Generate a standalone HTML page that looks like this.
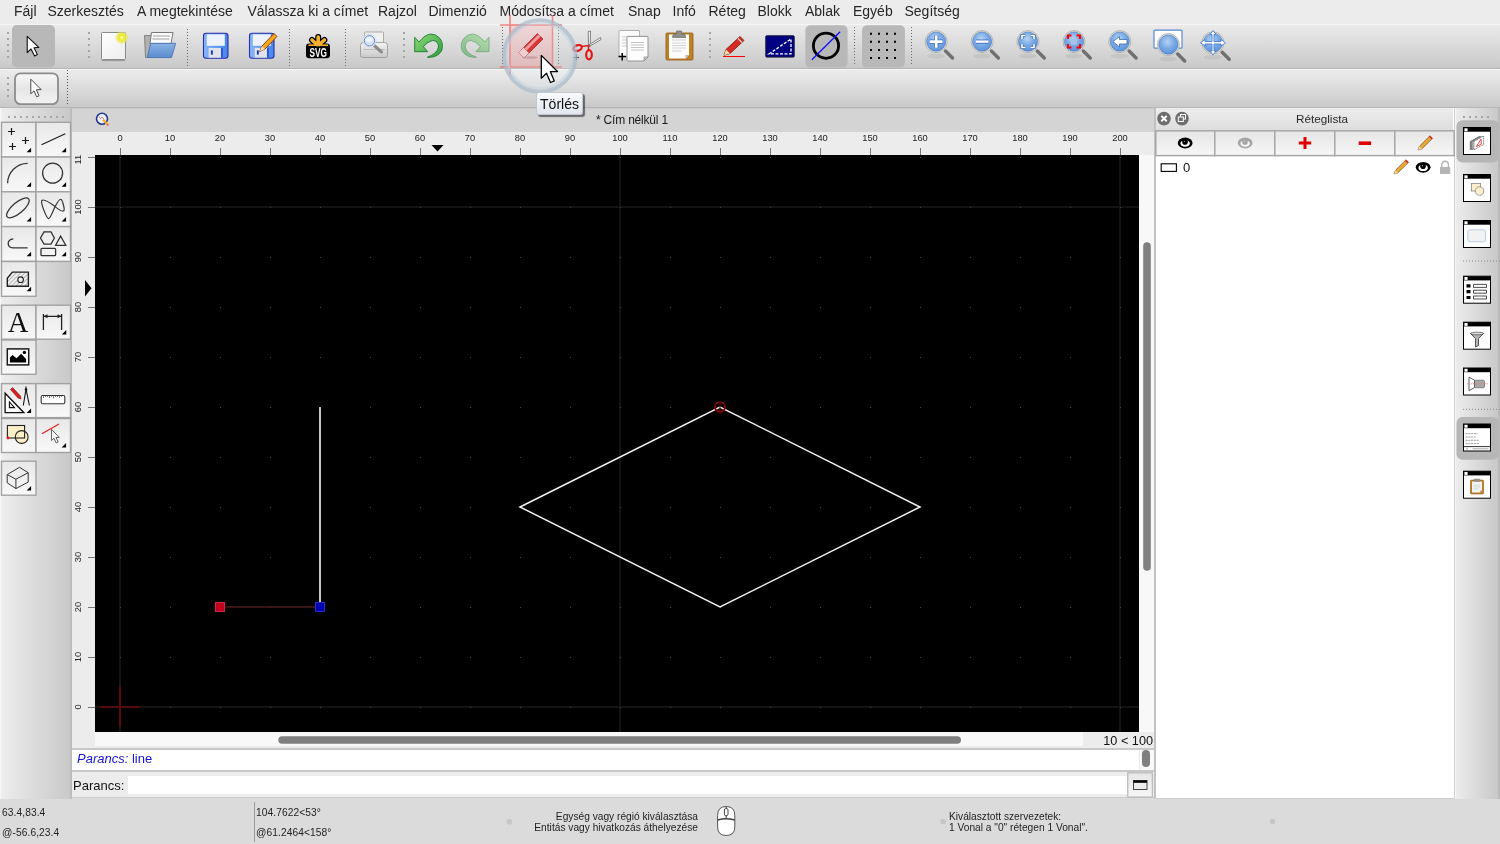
<!DOCTYPE html>
<html><head><meta charset="utf-8">
<style>
*{margin:0;padding:0;box-sizing:border-box}
html{will-change:transform}
html,body{width:1500px;height:844px;overflow:hidden;background:#ececec;font-family:"Liberation Sans",sans-serif;color:#262626}
.a{position:absolute}
#menubar{left:0;top:0;width:1500px;height:24px;background:#ececec}
#menubar span{position:absolute;top:3px;font-size:14px;line-height:17px;color:#262626}
#tb1{left:0;top:24px;width:1500px;height:45px;background:linear-gradient(#eaeaea,#c9c9c9);border-top:1px solid #f5f5f5;border-bottom:1px solid #b4b4b4}
#tb2{left:0;top:69px;width:1500px;height:39px;background:linear-gradient(#ececec,#c9c9c9);border-top:1px solid #f6f6f6;border-bottom:1px solid #b6b6b6}
#left{left:0;top:108px;width:72px;height:691px;background:linear-gradient(90deg,#f8f8f8 0,#f8f8f8 1px,#eeeeee 1px,#e2e2e2 30%,#c9c9c9 100%);border-right:2px solid #bdbdbd}
#doctitle{left:72px;top:108px;width:1082px;height:24px;background:#d4d4d4;border-top:1px solid #c9c9c9}
#doctitle span{position:absolute;left:524px;top:4px;font-size:12px;line-height:14px;letter-spacing:-.2px;color:#1a1a1a}
#rulerT{left:72px;top:132px;width:1082px;height:23px;background:#ececec}
#rulerL{left:72px;top:155px;width:23px;height:591px;background:#ececec}
.rl{position:absolute;top:133px;width:40px;text-align:center;font-size:9.3px;line-height:11px;color:#222}
.vl{position:absolute;left:-14px;width:40px;height:40px;line-height:40px;text-align:center;font-size:9.3px;color:#222;transform:rotate(-90deg)}
#canvas{left:95px;top:155px;width:1044px;height:577px;background:#000;overflow:hidden}
#vscroll{left:1139px;top:155px;width:15px;height:591px;background:#f8f8f8}
#hscroll{left:95px;top:732px;width:988px;height:14px;background:#f8f8f8}
#zoomlbl{left:1083px;top:732px;width:71px;height:16px;background:#ececec;font-size:12.7px;line-height:18px;text-align:right;padding-right:1px;color:#111;white-space:nowrap;overflow:hidden}
#cmdout{left:72px;top:748px;width:1082px;height:24px;background:#fff;border-top:2px solid #c8c8c8;border-bottom:2px solid #c8c8c8}
#cmdout span{position:absolute;left:5px;top:1px;font-size:13px;line-height:16px;color:#1414d2}
#cmdin{left:72px;top:772px;width:1082px;height:26px;background:#ececec;border-bottom:1px solid #cdcdcd}
#cmdin span{position:absolute;left:1px;top:6px;font-size:13px;line-height:16px;color:#111}
#cmdfield{left:128px;top:776px;width:999px;height:18px;background:#fff}
#status{left:0;top:798px;width:1500px;height:46px;background:#dbdbdb}
.st{position:absolute;font-size:10.2px;line-height:11px;color:#1e1e1e;white-space:nowrap}
.co{letter-spacing:.1px}
#dock{left:1154px;top:108px;width:301px;height:691px;border-bottom:1px solid #cecece;background:#fff;border-left:2px solid #c2c2c2;border-right:1px solid #d0d0d0}
#docktitle{left:1156px;top:108px;width:297px;height:22px;background:linear-gradient(#ececec,#dedede)}
#docktitle span{position:absolute;left:140px;top:4px;font-size:11.7px;line-height:14px;color:#2a2a2a}
#rtb{left:1455px;top:108px;width:45px;height:691px;background:linear-gradient(90deg,#f6f6f6 0,#f6f6f6 1px,#ececec 1px,#c8c8c8 43px,#bababa 43px);}
#tooltip{left:536px;top:91.5px;width:47px;height:23.5px;border:1px solid #c4c8ce;border-radius:3px;background:linear-gradient(#f8f9fb,#e2e7ee);box-shadow:2px 2px 1px rgba(0,0,0,.5);font-size:14px;line-height:22px;text-align:center;color:#111}
</style></head><body>

<div id="menubar" class="a">
<span style="left:14px">Fájl</span>
<span style="left:47.5px">Szerkesztés</span>
<span style="left:137px">A megtekintése</span>
<span style="left:247.5px">Válassza ki a címet</span>
<span style="left:378px">Rajzol</span>
<span style="left:428.5px">Dimenzió</span>
<span style="left:499.5px">Módosítsa a címet</span>
<span style="left:628px">Snap</span>
<span style="left:672.5px">Infó</span>
<span style="left:708.5px">Réteg</span>
<span style="left:757.5px">Blokk</span>
<span style="left:805px">Ablak</span>
<span style="left:853px">Egyéb</span>
<span style="left:904.5px">Segítség</span>
</div>

<div id="status" class="a"></div>
<div id="tb1" class="a"></div>
<div id="tb2" class="a"></div>
<div id="left" class="a"></div>
<div id="doctitle" class="a"><span>* Cím nélkül 1</span></div>
<div id="rulerT" class="a"></div>
<div id="rulerL" class="a" style="overflow:hidden"><div class="vl" style="top:532px">0</div><div class="vl" style="top:482px">10</div><div class="vl" style="top:432px">20</div><div class="vl" style="top:382px">30</div><div class="vl" style="top:332px">40</div><div class="vl" style="top:282px">50</div><div class="vl" style="top:232px">60</div><div class="vl" style="top:182px">70</div><div class="vl" style="top:132px">80</div><div class="vl" style="top:82px">90</div><div class="vl" style="top:32px">100</div><div class="vl" style="top:-18px">110</div></div>
<div class="rl" style="left:100px">0</div><div class="rl" style="left:150px">10</div><div class="rl" style="left:200px">20</div><div class="rl" style="left:250px">30</div><div class="rl" style="left:300px">40</div><div class="rl" style="left:350px">50</div><div class="rl" style="left:400px">60</div><div class="rl" style="left:450px">70</div><div class="rl" style="left:500px">80</div><div class="rl" style="left:550px">90</div><div class="rl" style="left:600px">100</div><div class="rl" style="left:650px">110</div><div class="rl" style="left:700px">120</div><div class="rl" style="left:750px">130</div><div class="rl" style="left:800px">140</div><div class="rl" style="left:850px">150</div><div class="rl" style="left:900px">160</div><div class="rl" style="left:950px">170</div><div class="rl" style="left:1000px">180</div><div class="rl" style="left:1050px">190</div><div class="rl" style="left:1100px">200</div>
<div id="canvas" class="a">
<svg width="1044" height="577" viewBox="95 155 1044 577" style="display:block">
<path d="M95 207H1139M95 707H1139" stroke="#131313" stroke-width="2"/>
<path d="M120 155V732M620 155V732M1120 155V732" stroke="#131313" stroke-width="2"/>
<path d="M120 707h1v1h-1zM120 657h1v1h-1zM120 607h1v1h-1zM120 557h1v1h-1zM120 507h1v1h-1zM120 457h1v1h-1zM120 407h1v1h-1zM120 357h1v1h-1zM120 307h1v1h-1zM120 257h1v1h-1zM120 207h1v1h-1zM120 157h1v1h-1zM170 707h1v1h-1zM170 657h1v1h-1zM170 607h1v1h-1zM170 557h1v1h-1zM170 507h1v1h-1zM170 457h1v1h-1zM170 407h1v1h-1zM170 357h1v1h-1zM170 307h1v1h-1zM170 257h1v1h-1zM170 207h1v1h-1zM170 157h1v1h-1zM220 707h1v1h-1zM220 657h1v1h-1zM220 607h1v1h-1zM220 557h1v1h-1zM220 507h1v1h-1zM220 457h1v1h-1zM220 407h1v1h-1zM220 357h1v1h-1zM220 307h1v1h-1zM220 257h1v1h-1zM220 207h1v1h-1zM220 157h1v1h-1zM270 707h1v1h-1zM270 657h1v1h-1zM270 607h1v1h-1zM270 557h1v1h-1zM270 507h1v1h-1zM270 457h1v1h-1zM270 407h1v1h-1zM270 357h1v1h-1zM270 307h1v1h-1zM270 257h1v1h-1zM270 207h1v1h-1zM270 157h1v1h-1zM320 707h1v1h-1zM320 657h1v1h-1zM320 607h1v1h-1zM320 557h1v1h-1zM320 507h1v1h-1zM320 457h1v1h-1zM320 407h1v1h-1zM320 357h1v1h-1zM320 307h1v1h-1zM320 257h1v1h-1zM320 207h1v1h-1zM320 157h1v1h-1zM370 707h1v1h-1zM370 657h1v1h-1zM370 607h1v1h-1zM370 557h1v1h-1zM370 507h1v1h-1zM370 457h1v1h-1zM370 407h1v1h-1zM370 357h1v1h-1zM370 307h1v1h-1zM370 257h1v1h-1zM370 207h1v1h-1zM370 157h1v1h-1zM420 707h1v1h-1zM420 657h1v1h-1zM420 607h1v1h-1zM420 557h1v1h-1zM420 507h1v1h-1zM420 457h1v1h-1zM420 407h1v1h-1zM420 357h1v1h-1zM420 307h1v1h-1zM420 257h1v1h-1zM420 207h1v1h-1zM420 157h1v1h-1zM470 707h1v1h-1zM470 657h1v1h-1zM470 607h1v1h-1zM470 557h1v1h-1zM470 507h1v1h-1zM470 457h1v1h-1zM470 407h1v1h-1zM470 357h1v1h-1zM470 307h1v1h-1zM470 257h1v1h-1zM470 207h1v1h-1zM470 157h1v1h-1zM520 707h1v1h-1zM520 657h1v1h-1zM520 607h1v1h-1zM520 557h1v1h-1zM520 507h1v1h-1zM520 457h1v1h-1zM520 407h1v1h-1zM520 357h1v1h-1zM520 307h1v1h-1zM520 257h1v1h-1zM520 207h1v1h-1zM520 157h1v1h-1zM570 707h1v1h-1zM570 657h1v1h-1zM570 607h1v1h-1zM570 557h1v1h-1zM570 507h1v1h-1zM570 457h1v1h-1zM570 407h1v1h-1zM570 357h1v1h-1zM570 307h1v1h-1zM570 257h1v1h-1zM570 207h1v1h-1zM570 157h1v1h-1zM620 707h1v1h-1zM620 657h1v1h-1zM620 607h1v1h-1zM620 557h1v1h-1zM620 507h1v1h-1zM620 457h1v1h-1zM620 407h1v1h-1zM620 357h1v1h-1zM620 307h1v1h-1zM620 257h1v1h-1zM620 207h1v1h-1zM620 157h1v1h-1zM670 707h1v1h-1zM670 657h1v1h-1zM670 607h1v1h-1zM670 557h1v1h-1zM670 507h1v1h-1zM670 457h1v1h-1zM670 407h1v1h-1zM670 357h1v1h-1zM670 307h1v1h-1zM670 257h1v1h-1zM670 207h1v1h-1zM670 157h1v1h-1zM720 707h1v1h-1zM720 657h1v1h-1zM720 607h1v1h-1zM720 557h1v1h-1zM720 507h1v1h-1zM720 457h1v1h-1zM720 407h1v1h-1zM720 357h1v1h-1zM720 307h1v1h-1zM720 257h1v1h-1zM720 207h1v1h-1zM720 157h1v1h-1zM770 707h1v1h-1zM770 657h1v1h-1zM770 607h1v1h-1zM770 557h1v1h-1zM770 507h1v1h-1zM770 457h1v1h-1zM770 407h1v1h-1zM770 357h1v1h-1zM770 307h1v1h-1zM770 257h1v1h-1zM770 207h1v1h-1zM770 157h1v1h-1zM820 707h1v1h-1zM820 657h1v1h-1zM820 607h1v1h-1zM820 557h1v1h-1zM820 507h1v1h-1zM820 457h1v1h-1zM820 407h1v1h-1zM820 357h1v1h-1zM820 307h1v1h-1zM820 257h1v1h-1zM820 207h1v1h-1zM820 157h1v1h-1zM870 707h1v1h-1zM870 657h1v1h-1zM870 607h1v1h-1zM870 557h1v1h-1zM870 507h1v1h-1zM870 457h1v1h-1zM870 407h1v1h-1zM870 357h1v1h-1zM870 307h1v1h-1zM870 257h1v1h-1zM870 207h1v1h-1zM870 157h1v1h-1zM920 707h1v1h-1zM920 657h1v1h-1zM920 607h1v1h-1zM920 557h1v1h-1zM920 507h1v1h-1zM920 457h1v1h-1zM920 407h1v1h-1zM920 357h1v1h-1zM920 307h1v1h-1zM920 257h1v1h-1zM920 207h1v1h-1zM920 157h1v1h-1zM970 707h1v1h-1zM970 657h1v1h-1zM970 607h1v1h-1zM970 557h1v1h-1zM970 507h1v1h-1zM970 457h1v1h-1zM970 407h1v1h-1zM970 357h1v1h-1zM970 307h1v1h-1zM970 257h1v1h-1zM970 207h1v1h-1zM970 157h1v1h-1zM1020 707h1v1h-1zM1020 657h1v1h-1zM1020 607h1v1h-1zM1020 557h1v1h-1zM1020 507h1v1h-1zM1020 457h1v1h-1zM1020 407h1v1h-1zM1020 357h1v1h-1zM1020 307h1v1h-1zM1020 257h1v1h-1zM1020 207h1v1h-1zM1020 157h1v1h-1zM1070 707h1v1h-1zM1070 657h1v1h-1zM1070 607h1v1h-1zM1070 557h1v1h-1zM1070 507h1v1h-1zM1070 457h1v1h-1zM1070 407h1v1h-1zM1070 357h1v1h-1zM1070 307h1v1h-1zM1070 257h1v1h-1zM1070 207h1v1h-1zM1070 157h1v1h-1zM1120 707h1v1h-1zM1120 657h1v1h-1zM1120 607h1v1h-1zM1120 557h1v1h-1zM1120 507h1v1h-1zM1120 457h1v1h-1zM1120 407h1v1h-1zM1120 357h1v1h-1zM1120 307h1v1h-1zM1120 257h1v1h-1zM1120 207h1v1h-1zM1120 157h1v1h-1z" fill="#444"/>
<path d="M100 707H140M120 687V727" stroke="#6a0a0a" stroke-width="1.6"/>
<path d="M220 607H315" stroke="#4e1c1c" stroke-width="1.6"/>
<path d="M320 407V602" stroke="#c4c4c4" stroke-width="2"/>
<rect x="215.5" y="602.5" width="9" height="9" fill="#c2001e" stroke="#cc2848" stroke-width="1"/>
<rect x="315.5" y="602.5" width="9" height="9" fill="#0000b4" stroke="#2a2ac4" stroke-width="1"/>
<path d="M520 507L720 407L920 507L720 607Z" fill="none" stroke="#f2f2f2" stroke-width="1.5"/>
<circle cx="720" cy="407" r="5" fill="none" stroke="#8a0000" stroke-width="1.7"/>
<path d="M720 402V412" stroke="#7a0000" stroke-width="1"/>
</svg>
</div>
<div id="vscroll" class="a"></div>
<div id="hscroll" class="a"></div>
<div id="zoomlbl" class="a">10 &lt; 100</div>
<div id="cmdout" class="a"><span><i>Parancs:</i> line</span></div>
<div id="cmdin" class="a"><span>Parancs:</span></div>
<div id="cmdfield" class="a"></div>
<div id="dock" class="a"></div>
<div id="docktitle" class="a"><span>Réteglista</span></div>
<div id="rtb" class="a"></div>
<div class="st co" style="left:2px;top:807px">63.4,83.4</div>
<div class="st co" style="left:2px;top:827px">@-56.6,23.4</div>
<div class="st co" style="left:256px;top:807px">104.7622&lt;53°</div>
<div class="st co" style="left:256px;top:827px">@61.2464&lt;158°</div>
<div class="st" style="left:498px;top:811px;width:200px;text-align:right">Egység vagy régió kiválasztása<br>Entitás vagy hivatkozás áthelyezése</div>
<div class="st" style="left:949px;top:811px">Kiválasztott szervezetek:<br>1 Vonal a "0" rétegen 1 Vonal".</div>

<svg class="a" style="left:0;top:0" width="1500" height="844">
<!-- ruler ticks -->
<path d="M120.5 148v7M170.5 148v7M220.5 148v7M270.5 148v7M320.5 148v7M370.5 148v7M420.5 148v7M470.5 148v7M520.5 148v7M570.5 148v7M620.5 148v7M670.5 148v7M720.5 148v7M770.5 148v7M820.5 148v7M870.5 148v7M920.5 148v7M970.5 148v7M1020.5 148v7M1070.5 148v7M1120.5 148v7M88 707.5h7M88 657.5h7M88 607.5h7M88 557.5h7M88 507.5h7M88 457.5h7M88 407.5h7M88 357.5h7M88 307.5h7M88 257.5h7M88 207.5h7M88 157.5h7" stroke="#777" stroke-width="1"/>
<path d="M431.5 145H443.5L437.5 151.5Z" fill="#000"/>
<path d="M85 280V296.5L91.5 288.3Z" fill="#000"/>
<!-- scrollbar thumbs -->
<rect x="278.3" y="736.2" width="682.7" height="7.6" rx="3.8" fill="#7f7f7f"/>
<rect x="1143.2" y="242.3" width="7.6" height="328.5" rx="3.8" fill="#7f7f7f"/>
<rect x="1139" y="750" width="15" height="20" fill="#f8f8f8"/><path d="M1139.5 750v20" stroke="#ececec"/>
<rect x="1142" y="750" width="8" height="17" rx="4" fill="#7f7f7f"/>
<path d="M254.5 802V842" stroke="#9a9a9a"/>
</svg>


<svg class="a" style="left:0;top:0" width="1500" height="844">
<defs>
<linearGradient id="gBtn" x1="0" y1="0" x2="0" y2="1"><stop offset="0" stop-color="#e8e8e8"/><stop offset="1" stop-color="#f8f8f8"/></linearGradient>
<linearGradient id="gPage" x1="0" y1="0" x2="1" y2="1"><stop offset="0" stop-color="#ffffff"/><stop offset="1" stop-color="#ececec"/></linearGradient>
<radialGradient id="gGlow"><stop offset="0" stop-color="#ffffe8"/><stop offset=".35" stop-color="#f0ec20"/><stop offset=".7" stop-color="#ece850" stop-opacity=".8"/><stop offset="1" stop-color="#ece850" stop-opacity="0"/></radialGradient>
<linearGradient id="gFloppy" x1="0" y1="0" x2="1" y2="0"><stop offset="0" stop-color="#8ab8f8"/><stop offset=".5" stop-color="#5c9af2"/><stop offset="1" stop-color="#4a86ea"/></linearGradient>
<linearGradient id="gGreen" x1="0" y1="0" x2="1" y2="1"><stop offset="0" stop-color="#8ed878"/><stop offset="1" stop-color="#2c9e40"/></linearGradient>
<radialGradient id="gLens" cx=".45" cy=".35" r=".7"><stop offset="0" stop-color="#b8d4f4"/><stop offset=".5" stop-color="#7aaae6"/><stop offset="1" stop-color="#5a8ed8"/></radialGradient>
<linearGradient id="gPrinter" x1="0" y1="0" x2="0" y2="1"><stop offset="0" stop-color="#f4f4f4"/><stop offset="1" stop-color="#c8c8c8"/></linearGradient>
<linearGradient id="gFolder" x1="0" y1="0" x2="0" y2="1"><stop offset="0" stop-color="#8ab4e4"/><stop offset="1" stop-color="#5a8ccc"/></linearGradient>
</defs>
<!-- toolbar1 handle -->
<path d="M7 32h2v2h-2zM7 38h2v2h-2zM7 44h2v2h-2zM7 50h2v2h-2zM7 56h2v2h-2z" fill="#a4a4a4"/>
<!-- select button -->
<rect x="12" y="25" width="43" height="42.5" rx="5" fill="#b8b8b8"/>
<path d="M27.2 36.3V52.6L31 49L34.6 56L37.4 54.6L34 47.8L38.8 47.4Z" fill="#fff" stroke="#111" stroke-width="1.1" stroke-linejoin="round"/>
<path d="M88 32h2v2h-2zM88 38h2v2h-2zM88 44h2v2h-2zM88 50h2v2h-2zM88 56h2v2h-2z" fill="#a4a4a4"/>
<!-- new doc -->
<rect x="101.5" y="32.5" width="24" height="27" rx="1" fill="url(#gPage)" stroke="#8a8a8a"/>
<path d="M102 60.5h23" stroke="#9a9a9a" stroke-width="1.2"/>
<circle cx="121.7" cy="37.6" r="6.8" fill="url(#gGlow)"/>
<!-- open folder -->
<path d="M144.5 35.5h7v22h-6z" fill="#b0b0b0" stroke="#707070" stroke-width=".8"/>
<path d="M151.5 32.5h21.5l-2 11h-21z" fill="#fafafa" stroke="#6a6a6a" stroke-width=".9"/>
<path d="M153 36h17M152.5 39h17" stroke="#c0c0c0" stroke-width="1.4"/>
<path d="M150.8 43.3H175.7L171.5 57.6H147.2Z" fill="url(#gFolder)" stroke="#4a74b8" stroke-width=".9"/>
<path d="M187.5 29v38" stroke="#6a6a6a" stroke-dasharray="1 2"/>
<!-- save -->
<g id="floppy">
<rect x="203.5" y="33.3" width="24.5" height="25" rx="2.5" fill="url(#gFloppy)" stroke="#2a2eaa" stroke-width="1.1"/>
<rect x="206.8" y="34.3" width="18" height="11.5" fill="#eef2fc"/>
<rect x="208.6" y="47.9" width="12.5" height="9.8" fill="#e2e2ea"/>
<rect x="210.9" y="50.4" width="1.9" height="4.2" fill="#1030d8"/>
<rect x="221.2" y="48" width="1.4" height="9.5" fill="#1a3ae0"/>
</g>
<use href="#floppy" x="46"/>
<path d="M259.6 51.5L262 46L274 33.5L277 36.5L265 49Z" fill="#f6a818" stroke="#8a2a10" stroke-width=".9"/>
<path d="M259.6 51.5L262 46L265 49Z" fill="#f4e0b0"/>
<path d="M289.5 29v38" stroke="#6a6a6a" stroke-dasharray="1 2"/>
<!-- svg logo -->
<path d="M318.2 37V44M312 40L317 44.5M324.4 40L319.4 44.5" stroke="#000" stroke-width="6" stroke-linecap="round"/>
<rect x="306" y="43.4" width="24" height="14.8" rx="3.2" fill="#000"/>
<path d="M318.2 37V44M312 40L317 44.5M324.4 40L319.4 44.5" stroke="#f6b030" stroke-width="3.6" stroke-linecap="round"/>
<path d="M308.5 45.2h19.5" stroke="#f6b030" stroke-width="1.6"/>
<text x="318.2" y="56.8" text-anchor="middle" font-family="Liberation Sans" font-weight="bold" font-size="12.5" fill="#fff" textLength="17.5" lengthAdjust="spacingAndGlyphs">SVG</text>
<path d="M345.5 29v38" stroke="#6a6a6a" stroke-dasharray="1 2"/>
<!-- print preview -->
<rect x="364.5" y="32" width="19" height="12" rx="1" fill="#f0f0f0" stroke="#9a9a9a" stroke-width=".8"/>
<path d="M360.5 45.5q0-3 3-3h21q3 0 3 3v10q0 2-2 2h-23q-2 0-2-2z" fill="url(#gPrinter)" stroke="#9a9a9a" stroke-width=".9"/>
<path d="M363 49.5h22" stroke="#bababa"/>
<path d="M373.5 45L381.5 52" stroke="#8a8a8a" stroke-width="3" stroke-linecap="round"/>
<circle cx="369.5" cy="40.8" r="6.6" fill="#fafafa" stroke="#c8c8c8" stroke-width=".6"/>
<circle cx="369.5" cy="40.8" r="5.2" fill="#d4e2f4" stroke="#5a8ad0" stroke-width="1"/>
<ellipse cx="369" cy="39.5" rx="3.5" ry="2.5" fill="#eef4fc"/>
<path d="M403 32h2v2h-2zM403 38h2v2h-2zM403 44h2v2h-2zM403 50h2v2h-2zM403 56h2v2h-2z" fill="#a4a4a4"/>
<!-- undo -->
<g id="undo">
<path d="M414.7 37.3V51.7H427.7L423.3 46.5Q428 41.5 432.5 40.5Q438.5 40.5 438.5 47Q437.5 53.5 427.3 57.3Q437 58 441.5 51Q444 44 440 38.5Q436 34 431 34Q425 34.5 419 42Z" fill="url(#gGreen)" stroke="#1a7a2c" stroke-width=".9" stroke-linejoin="round"/>
</g>
<use href="#undo" transform="translate(903.7 0) scale(-1 1)" opacity=".5"/>
<!-- eraser highlight box -->
<defs><linearGradient id="gPink" x1="0" y1="0" x2="0" y2="1"><stop offset="0" stop-color="#f2d2d2"/><stop offset="1" stop-color="#deb0b0"/></linearGradient></defs>
<rect x="509.5" y="24.5" width="43" height="42.5" fill="url(#gPink)"/>
<path d="M502.5 27v39M558.5 27v39" stroke="#6a6a6a" stroke-dasharray="1 2"/>
<!-- eraser -->
<path d="M521 50L537.5 33.5L543 39L526.5 55.5Z" fill="#d41010" stroke="#8a0808" stroke-width=".8"/>
<path d="M524 49L538.5 34.5L540.5 36.5L526 51Z" fill="#f48a8a"/>
<path d="M518.5 52.5L523.5 47.5L529 53L524 58Z" fill="#f4c8c8" stroke="#a06060" stroke-width=".7"/>
<ellipse cx="530" cy="57.5" rx="8" ry="1.3" fill="#b07878" opacity=".6"/>
<!-- scissors -->
<path d="M588.2 31.5L590.5 31L590.2 46.5L588.5 46.2Z" fill="#f4f4f4" stroke="#555" stroke-width=".7"/>
<path d="M600.5 37.5L601 39.5L590 46L589 44.8Z" fill="#f4f4f4" stroke="#555" stroke-width=".7"/>
<ellipse cx="577.6" cy="48" rx="4.3" ry="2.8" fill="none" stroke="#e01818" stroke-width="2.2" transform="rotate(-20 577.6 48)"/>
<ellipse cx="589" cy="54.8" rx="2.8" ry="4.6" fill="none" stroke="#e01818" stroke-width="2.2"/>
<path d="M581.5 46.5L588.5 45.5L588.5 50" stroke="#e01818" stroke-width="1.5" fill="none"/>
<path d="M573.5 57.5h5.5M576.3 54.8v5.5" stroke="#333" stroke-width=".9"/>
<!-- copy -->
<path d="M619 31q0-.5.5-.5h19.5q.5 0 .5.5v25.5h-20.5z" fill="#fbfbfb" stroke="#a8a8a8" stroke-width=".9"/>
<path d="M622 37h14M622 40h14M622 43h14M622 46h14" stroke="#d0d0d0" stroke-width="1.2"/>
<path d="M627 37q0-.6.6-.6h19.8q.6 0 .6.6v20l-4 4h-16.4q-.6 0-.6-.6z" fill="#fdfdfd" stroke="#8a8a8a" stroke-width=".9"/>
<path d="M648 57l-4 4v-4z" fill="#c8c8c8" stroke="#8a8a8a" stroke-width=".7"/>
<path d="M631 42.5h13M631 45h13M631 47.5h13M631 50h13" stroke="#c4c4c4" stroke-width="1.1"/>
<path d="M618.5 56.6h7.5M622.2 53v7.5" stroke="#000" stroke-width="1.5"/>
<!-- paste -->
<rect x="666" y="33" width="27" height="27" rx="1.2" fill="#c08024" stroke="#8a5a14" stroke-width=".8"/>
<path d="M669 34.5h20v20.5l-3.5 3.5h-16.5z" fill="#fcfcfc"/>
<path d="M689 55l-3.5 3.5v-3.5z" fill="#b8b8b8"/>
<path d="M672 40h14M672 43h14M672 45.5h14M672 48h14M672 51h10" stroke="#d0d0d0" stroke-width="1.1"/>
<path d="M672.6 36.5q0-2.5 2.5-2.5h1.5v-3h5v3h1.5q2.5 0 2.5 2.5v1h-13z" fill="#909088" stroke="#6a6a64" stroke-width=".7"/>
<path d="M709 32h2v2h-2zM709 38h2v2h-2zM709 44h2v2h-2zM709 50h2v2h-2zM709 56h2v2h-2z" fill="#a4a4a4"/>
<!-- pen -->
<path d="M724 55.2L726 49.5L740 36.5L744 40.5L730 53.5Z" fill="#d82828" stroke="#7a2a10" stroke-width=".9" stroke-linejoin="round"/>
<path d="M738 38.5L742 42.5" stroke="#f0c8c8" stroke-width="1.4"/>
<path d="M724 55.2L726 49.5L730 53.5Z" fill="#f4d8a8"/>
<path d="M723 56.5h22" stroke="#ff0000" stroke-width="1"/>
<!-- dim -->
<rect x="765.8" y="35.8" width="28.4" height="21.3" rx=".8" fill="#000080" stroke="#1a1a3a" stroke-width="1"/>
<path d="M769 53.9L791 39V53.9Z" fill="none" stroke="#fff" stroke-width="1.3" stroke-dasharray="3 1.5"/>
<!-- circle snap btn -->
<rect x="805.4" y="25.3" width="42.2" height="42.3" rx="5" fill="#b8b8b8"/>
<circle cx="826" cy="45.7" r="12.6" fill="none" stroke="#000" stroke-width="2.8"/>
<path d="M811.9 59.8L840.1 31.8" stroke="#1010ff" stroke-width="1.3"/>
<path d="M854.5 27v39" stroke="#6a6a6a" stroke-dasharray="1 2"/>
<!-- grid btn -->
<rect x="862" y="25.3" width="42.9" height="42.3" rx="5" fill="#b8b8b8"/>
<g fill="#000">
<path d="M870 32.8h2v2h-2zM878 32.8h2v2h-2zM886 32.8h2v2h-2zM894 32.8h2v2h-2z"/>
<path d="M870 40.8h2v2h-2zM878 40.8h2v2h-2zM886 40.8h2v2h-2zM894 40.8h2v2h-2z"/>
<path d="M870 49h2v2h-2zM878 49h2v2h-2zM886 49h2v2h-2zM894 49h2v2h-2z"/>
<path d="M870 57h2v2h-2zM878 57h2v2h-2zM886 57h2v2h-2zM894 57h2v2h-2z"/>
</g>
<path d="M911.5 27v39" stroke="#6a6a6a" stroke-dasharray="1 2"/>
<!-- toolbar 2 -->
<path d="M7 77h2v2h-2zM7 83h2v2h-2zM7 89h2v2h-2zM7 95h2v2h-2z" fill="#a4a4a4"/>
<defs><linearGradient id="gB2" x1="0" y1="0" x2="0" y2="1"><stop offset="0" stop-color="#f8f8f8"/><stop offset=".5" stop-color="#e6e6e6"/><stop offset="1" stop-color="#f2f2f2"/></linearGradient></defs>
<rect x="15" y="73.3" width="43" height="30.8" rx="5.5" fill="url(#gB2)" stroke="#8c8c8c" stroke-width="1.8"/>
<path d="M30.8 79.2V93.8L34 90.8L36.7 96.8L39 95.8L36.4 89.8L41.2 89.6Z" fill="#fff" stroke="#4a4a4a" stroke-width="1" stroke-linejoin="round"/>
<path d="M67.5 70v36" stroke="#555" stroke-dasharray="1 2"/>
<!-- doc title icon -->
<circle cx="102" cy="118.8" r="5.5" fill="#e8eef8" stroke="#2a3a8a" stroke-width="1.6"/>
<path d="M99 116.5l1.5 2 1.5-1.5 2 2" stroke="#c04040" stroke-width=".6" fill="none"/>
<path d="M103 119.5L107.8 124.8" stroke="#f0b020" stroke-width="2.2"/>
<path d="M107 124l1.5 1.5" stroke="#e06060" stroke-width="1.5"/>
<!-- left panel -->
<path d="M8 116h2v2h-2zM14 116h2v2h-2zM20 116h2v2h-2zM26 116h2v2h-2zM32 116h2v2h-2zM38 116h2v2h-2zM44 116h2v2h-2zM50 116h2v2h-2zM56 116h2v2h-2zM62 116h2v2h-2z" fill="#a8a8a8"/>
<rect x="1.5" y="122.3" width="34.5" height="34.8" fill="url(#gBtn)" stroke="#a2a2a2" stroke-width="1.4"/>
<rect x="36" y="122.3" width="34.5" height="34.8" fill="url(#gBtn)" stroke="#a2a2a2" stroke-width="1.4"/>
<rect x="1.5" y="157" width="34.5" height="34.8" fill="url(#gBtn)" stroke="#a2a2a2" stroke-width="1.4"/>
<rect x="36" y="157" width="34.5" height="34.8" fill="url(#gBtn)" stroke="#a2a2a2" stroke-width="1.4"/>
<rect x="1.5" y="191.8" width="34.5" height="34.8" fill="url(#gBtn)" stroke="#a2a2a2" stroke-width="1.4"/>
<rect x="36" y="191.8" width="34.5" height="34.8" fill="url(#gBtn)" stroke="#a2a2a2" stroke-width="1.4"/>
<rect x="1.5" y="226.6" width="34.5" height="34.8" fill="url(#gBtn)" stroke="#a2a2a2" stroke-width="1.4"/>
<rect x="36" y="226.6" width="34.5" height="34.8" fill="url(#gBtn)" stroke="#a2a2a2" stroke-width="1.4"/>
<rect x="1.5" y="261.5" width="34.5" height="34.8" fill="url(#gBtn)" stroke="#a2a2a2" stroke-width="1.4"/>
<rect x="1.5" y="305.2" width="34.5" height="34" fill="url(#gBtn)" stroke="#a2a2a2" stroke-width="1.4"/>
<rect x="36" y="305.2" width="34.5" height="34" fill="url(#gBtn)" stroke="#a2a2a2" stroke-width="1.4"/>
<rect x="1.5" y="340" width="34.5" height="34.3" fill="url(#gBtn)" stroke="#a2a2a2" stroke-width="1.4"/>
<rect x="1.5" y="383.6" width="34.5" height="34" fill="url(#gBtn)" stroke="#a2a2a2" stroke-width="1.4"/>
<rect x="36" y="383.6" width="34.5" height="34" fill="url(#gBtn)" stroke="#a2a2a2" stroke-width="1.4"/>
<rect x="1.5" y="418.5" width="34.5" height="34" fill="url(#gBtn)" stroke="#a2a2a2" stroke-width="1.4"/>
<rect x="36" y="418.5" width="34.5" height="34" fill="url(#gBtn)" stroke="#a2a2a2" stroke-width="1.4"/>
<rect x="1.5" y="461.2" width="34.5" height="34" fill="url(#gBtn)" stroke="#a2a2a2" stroke-width="1.4"/>
<path d="M26.6 186.8L31.1 182.3V186.8ZM61.599999999999994 186.8L66.1 182.3V186.8ZM26.6 152.2L31.1 147.7V152.2ZM61.599999999999994 152.2L66.1 147.7V152.2ZM26.6 221.5L31.1 217.0V221.5ZM61.599999999999994 221.5L66.1 217.0V221.5ZM26.6 256.3L31.1 251.8V256.3ZM61.599999999999994 256.3L66.1 251.8V256.3ZM26.6 291.2L31.1 286.7V291.2ZM61.8 334.6L66.3 330.1V334.6ZM26.6 413L31.1 408.5V413ZM61.599999999999994 447.5L66.1 443.0V447.5ZM26.6 490.5L31.1 486.0V490.5Z" fill="#000"/>
<g fill="none" stroke="#1a1a1a" stroke-width="1.2">
<path d="M8 131.5h7M11.5 128v7M22 140.5h7M25.5 137v7M9 146.5h7M12.5 143v7"/>
<path d="M41.5 144.7L65.3 133.8"/>
</g>
<g fill="none" stroke="#333" stroke-width="1.3">
<path d="M7.6 183.3A20 20 0 0 1 27.6 163.4"/>
<circle cx="52.6" cy="173.2" r="10"/>
<ellipse cx="17.9" cy="207.9" rx="14" ry="5.4" transform="rotate(-40 17.9 207.9)"/>
<path d="M41.8 200.5C44 198.5 51 203.5 55.1 206.6C57.5 202 59.5 198.8 60.9 199.3C62.5 199.8 65 209.5 63.8 210.8C62.5 212 58 209 55.1 206.6C53 211 50.5 218.6 48.6 218.6C46.5 218.3 40.5 203 41.8 200.5Z" stroke-width="1.2"/>
<path d="M13.3 238.8Q8.2 239.5 8.2 243.4T12.9 247.9H27.6"/>
<path d="M44 231.9h7l3.4 6.1-3.4 6.1h-7l-3.5-6.1z"/>
<path d="M55.6 245.3L60.6 236.1L65.8 245.3Z"/>
<rect x="41" y="248.3" width="14.6" height="7.4" rx="1"/>
</g>
<defs><pattern id="hatch" width="3" height="3" patternUnits="userSpaceOnUse" patternTransform="rotate(45)"><rect width="3" height="3" fill="#f0f0f0"/><path d="M0 0V3" stroke="#777" stroke-width="1"/></pattern></defs>
<path d="M7.3 278.3L12.4 272.1H28.4V286.3H7.3Z" fill="url(#hatch)" stroke="#222" stroke-width="1.4"/>
<circle cx="20.6" cy="279.7" r="2.8" fill="#f0f0f0" stroke="#222" stroke-width="1.1"/>
<text x="18" y="331.7" text-anchor="middle" font-family="Liberation Serif" font-size="28.5" fill="#111">A</text>
<path d="M43.4 314v16M61.6 314v16M44 316.3h17" stroke="#222" stroke-width="1.3"/>
<path d="M43.5 316.3l4-2v4zM61.5 316.3l-4-2v4z" fill="#222"/>
<rect x="7.3" y="348.9" width="21.4" height="16" fill="#fff" stroke="#1a1a1a" stroke-width="1.5"/>
<path d="M9.9 362.5V357.5L12.5 355L16.5 358.3L21.2 353.8L26.1 359V362.5Z" fill="#000"/>
<circle cx="24.4" cy="352.4" r="1.7" fill="#000"/>
<path d="M5.1 412.7V393.2L23.9 412.7Z" fill="#fff" stroke="#111" stroke-width="1.3"/>
<path d="M9.4 407.6V401.9L14.5 407.6Z" fill="#e8e8e8" stroke="#111" stroke-width="1.1"/>
<path d="M10.5 389.5L12.5 387.5L20.5 396L21 399L18 398Z" fill="#d82020" stroke="#7a1010" stroke-width=".6"/>
<path d="M26 386.5V389M26 389L23.3 405.5M26 389L29.4 405.5" stroke="#111" stroke-width="1.1" fill="none"/>
<circle cx="26" cy="389.5" r="1.3" fill="#111"/>
<rect x="41.2" y="395.5" width="23.6" height="8.2" rx="1.5" fill="#fff" stroke="#333" stroke-width="1.1"/>
<path d="M43.5 395.5v2.5M45.5 395.5v1.5M47.5 395.5v1.5M49.5 395.5v2.5M51.5 395.5v1.5M53.5 395.5v3M55.5 395.5v1.5M57.5 395.5v1.5M59.5 395.5v2.5M61.5 395.5v1.5" stroke="#444" stroke-width=".7"/>
<rect x="7.4" y="425.5" width="17.2" height="12.5" fill="#fbf0c8"/>
<circle cx="21.7" cy="437" r="6.4" fill="#fbf0c8"/>
<rect x="7.4" y="425.5" width="17.2" height="12.5" fill="none" stroke="#222" stroke-width="1.1"/>
<circle cx="21.7" cy="437" r="6.4" fill="none" stroke="#222" stroke-width="1.1"/>
<circle cx="8" cy="438" r="1.4" fill="#f01818"/>
<path d="M41.9 433.7L59 424" stroke="#ee2020" stroke-width="1.3"/>
<path d="M51.5 429.3V440.5L54 438.3L56.2 443L58.2 442L56 437.5H59.3Z" fill="#f4f4f4" stroke="#555" stroke-width=".9" stroke-linejoin="round"/>
<path d="M7.2 474.6L19.5 467.3L28.2 472.7V482.1L15.9 488.6L7.2 482.8ZM7.2 474.6L15.9 479.2L28.2 472.7M15.9 479.2V488.6" fill="none" stroke="#333" stroke-width="1" stroke-linejoin="round"/>
<!-- dock title buttons -->
<circle cx="1164" cy="118.6" r="6.8" fill="#6e6e6e"/>
<path d="M1161.3 115.9l5.4 5.4M1166.7 115.9l-5.4 5.4" stroke="#fff" stroke-width="2"/>
<circle cx="1182" cy="118.6" r="6.8" fill="#6e6e6e"/>
<rect x="1180.5" y="114.5" width="5" height="4.5" fill="none" stroke="#fff" stroke-width="1"/>
<rect x="1178.3" y="117" width="5" height="4.5" fill="#6e6e6e" stroke="#fff" stroke-width="1"/>
<!-- dock layer toolbar -->
<defs><linearGradient id="gLb" x1="0" y1="0" x2="0" y2="1"><stop offset="0" stop-color="#e6e6e6"/><stop offset="1" stop-color="#f6f6f6"/></linearGradient></defs>
<rect x="1155.8" y="130.8" width="59" height="24.8" fill="url(#gLb)" stroke="#a8a8a8" stroke-width="1.5"/>
<rect x="1214.8" y="130.8" width="60" height="24.8" fill="url(#gLb)" stroke="#a8a8a8" stroke-width="1.5"/>
<rect x="1274.8" y="130.8" width="60" height="24.8" fill="url(#gLb)" stroke="#a8a8a8" stroke-width="1.5"/>
<rect x="1334.8" y="130.8" width="60" height="24.8" fill="url(#gLb)" stroke="#a8a8a8" stroke-width="1.5"/>
<rect x="1394.8" y="130.8" width="59.4" height="24.8" fill="url(#gLb)" stroke="#a8a8a8" stroke-width="1.5"/>
<g id="eye">
<ellipse cx="1185.15" cy="143" rx="7.4" ry="5.4" fill="#000"/>
<ellipse cx="1185.15" cy="143.6" rx="4.7" ry="3.1" fill="#fff"/>
<circle cx="1185" cy="141.9" r="2.8" fill="#000"/>
<circle cx="1184.4" cy="141.3" r=".6" fill="#aaa"/>
</g>
<use href="#eye" x="60" opacity=".3"/>
<path d="M1298.8 143h12.4M1305 137v12" stroke="#e00000" stroke-width="3"/>
<path d="M1358.7 143.2h12.4" stroke="#e00000" stroke-width="3.6"/>
<g id="pencil">
<path d="M1418 150L1419.5 146.2L1430 135.8L1432.5 138.3L1422 148.8Z" fill="#e8a838" stroke="#7a5010" stroke-width=".7" stroke-linejoin="round"/>
<path d="M1429 136.8L1430 135.8L1432.5 138.3L1431.5 139.3Z" fill="#e02020"/>
<path d="M1418 150L1419.5 146.2L1422 148.8Z" fill="#f0d8a8"/>
</g>
<!-- layer row -->
<rect x="1161.2" y="163.8" width="15.2" height="7.6" fill="#fff" stroke="#000" stroke-width="1.1"/>
<text x="1183" y="171.6" font-family="Liberation Sans" font-size="13" fill="#111">0</text>
<use href="#pencil" transform="translate(-24 24)"/>
<use href="#eye" transform="translate(238 24.3)"/>
<path d="M1441.8 167.5v-2.5q0-3.7 3.3-3.7t3.3 3.7v2.5" fill="none" stroke="#b4b4b4" stroke-width="1.4"/>
<rect x="1440" y="167" width="10.2" height="7" fill="#b4b4b4"/>
<!-- right toolbar -->
<path d="M1463 116h2v2h-2zM1469 116h2v2h-2zM1475 116h2v2h-2zM1481 116h2v2h-2zM1487 116h2v2h-2z" fill="#a4a4a4"/>
<rect x="1456.5" y="120.3" width="42.5" height="42.3" rx="6" fill="#b6b6b6"/>
<rect x="1456.5" y="417" width="42.5" height="42.7" rx="6" fill="#b6b6b6"/>
<path d="M1463 261h48M1463 409.3h48" stroke="#888" stroke-dasharray="1 2"/>
<g id="win">
<rect x="1463.5" y="127.5" width="27" height="27" fill="#fff" stroke="#000" stroke-width="1"/>
<rect x="1463.5" y="127.5" width="27" height="4.2" fill="#000"/>
<rect x="1464.4" y="128.3" width="3.2" height="2.9" fill="#fff"/>
</g>
<use href="#win" y="47"/><use href="#win" y="93"/><use href="#win" y="148.7"/><use href="#win" y="194.7"/><use href="#win" y="240.5"/><use href="#win" y="296.5"/><use href="#win" y="343.7"/>
<path d="M1470.3 141.5l9.3-5.2v8.3l-9.3 5.2z" fill="#9a9a9a" stroke="#555" stroke-width=".7"/>
<path d="M1472 141.4l9.3-5.2v8.3l-9.3 5.2z" fill="#c8c8c8" stroke="#555" stroke-width=".6"/>
<path d="M1474 141.3l9.6-5.2v8.4l-9.6 5.2z" fill="#fff" stroke="#444" stroke-width=".7" stroke-dasharray="1.2 .6"/>
<path d="M1476.3 146.6l4.8-7.6l.2 5.2z" fill="none" stroke="#f04848" stroke-width="1"/>
<rect x="1471.5" y="183.5" width="9" height="7.5" fill="#fbf0c8" stroke="#777" stroke-width=".7"/>
<circle cx="1479.5" cy="191" r="4.3" fill="#fbf0c8" stroke="#777" stroke-width=".7"/>
<rect x="1467.8" y="229.8" width="17.8" height="12" rx="2.5" fill="#f2f2f2" stroke="#a8c0e0" stroke-width=".8"/>
<path d="M1466.5 284.3h4v3.2h-4zM1466.5 290.1h4v3.2h-4zM1466.5 295.9h4v3.2h-4z" fill="#000"/>
<path d="M1473.5 284.4h13v3h-13zM1473.5 290.2h13v3h-13zM1473.5 296h13v3h-13z" fill="#fff" stroke="#000" stroke-width=".7"/>
<path d="M1470.5 333.5h13l-5 5v7l-3 1.5v-8.5z" fill="#b4b4b4" stroke="#333" stroke-width=".8"/>
<ellipse cx="1477" cy="333.5" rx="6.5" ry="1.3" fill="#dcdcdc" stroke="#333" stroke-width=".6"/>
<path d="M1469 377.2v13.4l5.5-3v-7.4z" fill="#fff" stroke="#333" stroke-width=".8"/>
<rect x="1474.5" y="380.2" width="10" height="7.6" rx="1.2" fill="#a8a8a8" stroke="#555" stroke-width=".6"/>
<path d="M1467 383.8h22" stroke="#f07070" stroke-width=".7" stroke-dasharray="1.2 .8"/>
<path d="M1465.5 433.6h12M1465.5 437h10M1465.5 440.3h13M1465.5 443.6h14" stroke="#999" stroke-width=".9" stroke-dasharray="2.2 .6"/>
<path d="M1464 446.6h26" stroke="#000" stroke-width=".8"/>
<path d="M1467.8 447.8l-1.4 1 1.4 1M1472.5 448.8h16" stroke="#888" stroke-width=".7" fill="none"/>
<rect x="1470.5" y="480" width="13" height="14" rx="1" fill="#c08024" stroke="#8a5a14" stroke-width=".6"/>
<path d="M1472 481.5h10v9l-2 2h-8z" fill="#f4f4f4"/>
<path d="M1473.5 485h7M1473.5 487h7M1473.5 489h5" stroke="#c8c8c8" stroke-width=".7"/>
<path d="M1482 490.5l-2 2v-2z" fill="#aaa"/>
<rect x="1474" y="478.8" width="6" height="3" rx=".8" fill="#909088"/>
<!-- command window btn -->
<rect x="1127.8" y="772.8" width="24.5" height="24.2" fill="url(#gLb)" stroke="#b0b0b0" stroke-width="1"/>
<rect x="1133.5" y="780.5" width="13.5" height="9" fill="#ececec" stroke="#333" stroke-width=".9"/>
<rect x="1133.5" y="780.5" width="13.5" height="2.3" fill="#000"/>
<!-- status -->
<circle cx="509.4" cy="821.8" r="2.8" fill="#c6c6c6"/>
<circle cx="943.2" cy="821.5" r="2.8" fill="#c6c6c6"/>
<circle cx="1272.5" cy="821.5" r="2.8" fill="#c6c6c6"/>
<path d="M717.6 815.5q0-9 8.6-9t8.6 9v11.5q0 8.5-8.6 8.5t-8.6-8.5z" fill="#fff" stroke="#444" stroke-width=".9"/>
<path d="M717.6 820Q726.2 817.6 734.8 820" fill="none" stroke="#444" stroke-width="1.5"/>
<path d="M726.2 806.8v12" stroke="#444" stroke-width="1.1"/>
<rect x="724.4" y="808.6" width="3.6" height="7" rx="1.4" fill="#fff" stroke="#444" stroke-width="1"/>
<!-- highlight overlay -->
<path d="M500 25h62M500 67h62M510 15v60M552.5 15v52" stroke="#f06a6a" stroke-width="1.6" opacity=".8"/>
<circle cx="539.8" cy="56" r="35.8" fill="#e6ecf4" fill-opacity=".18" stroke="#a8bacc" stroke-width="4" stroke-opacity=".7"/>
<circle cx="539.8" cy="56" r="32.6" fill="none" stroke="#c4d0dc" stroke-width="2" stroke-opacity=".5"/>
<!-- mouse cursor -->
<path d="M541.3 55.4V78.2L546.5 73.3L550.5 82.5L554.3 80.9L550.4 71.7L557.5 71.5Z" fill="#fff" stroke="#000" stroke-width="1.3" stroke-linejoin="round"/>
<!-- zoom icons -->
<g id="mag">
<ellipse cx="936" cy="56" rx="9" ry="2.5" fill="#000" opacity=".06"/>
<path d="M945.5 51L952.5 58" stroke="#707070" stroke-width="3.4" stroke-linecap="round"/>
<circle cx="936.2" cy="41.6" r="11" fill="#e8e8e2" stroke="#b4b4ac" stroke-width="1"/>
<circle cx="936.2" cy="41.6" r="9.6" fill="url(#gLens)" stroke="#4a78c0" stroke-width=".6"/>
</g>
<path d="M930 41.6h12.4M936.2 35.4v12.4" stroke="#3a68b0" stroke-width="4.4"/>
<path d="M930 41.6h12.4M936.2 35.4v12.4" stroke="#fff" stroke-width="2.8"/>
<use href="#mag" x="45.9"/>
<path d="M976 41.6h12.4" stroke="#3a68b0" stroke-width="4"/>
<path d="M976 41.6h12.4" stroke="#fff" stroke-width="2.4"/>
<use href="#mag" x="91.8"/>
<path d="M1022 39v-3.5h3.5M1030.5 35.5h3.5v3.5M1034 44v3.5h-3.5M1025.5 47.5h-3.5v-3.5" fill="none" stroke="#3a68b0" stroke-width="3"/>
<path d="M1022 39v-3.5h3.5M1030.5 35.5h3.5v3.5M1034 44v3.5h-3.5M1025.5 47.5h-3.5v-3.5" fill="none" stroke="#fff" stroke-width="1.6"/>
<use href="#mag" x="137.8"/>
<path d="M1068 39v-3.5h3.5M1076.5 35.5h3.5v3.5M1080 44v3.5h-3.5M1071.5 47.5h-3.5v-3.5" fill="none" stroke="#ff0000" stroke-width="2"/>
<rect x="1071" y="38.6" width="6" height="6" fill="#a8c4ec"/>
<use href="#mag" x="183.6"/>
<path d="M1113 41.6L1119.5 36.5V39.5H1127V44H1119.5V47Z" fill="#fff" stroke="#3a68b0" stroke-width=".8" stroke-linejoin="round"/>
<rect x="1154" y="30.2" width="28" height="18" rx="1" fill="#fff" stroke="#5a88d4" stroke-width="1.2"/>
<use href="#mag" x="232.2" y="3"/>
<use href="#mag" x="276.7" y="1.2"/>
<path d="M1213 30.5L1210 34.5H1212V41.5H1205L1205 39.5L1200.5 42.8L1205 46V44H1212V51H1210L1213 55L1216 51H1214V44H1221V46L1225.5 42.8L1221 39.5V41.5H1214V34.5H1216Z" fill="#fff" stroke="#4a7ed0" stroke-width=".9" stroke-linejoin="round"/>
</svg>
<div id="tooltip" class="a">Törlés</div>
</body></html>
